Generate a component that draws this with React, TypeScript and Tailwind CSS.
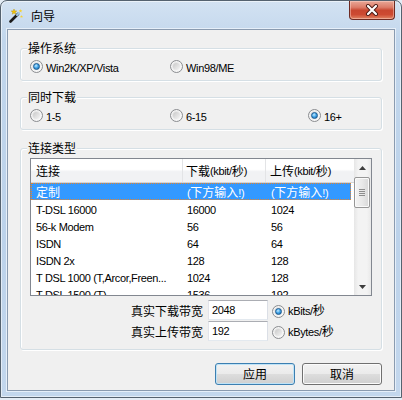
import React from "react";

const CJK = /([\u3000-\u9fff\uff00-\uffef]+)/;
const CJK1 = /[\u3000-\u9fff\uff00-\uffef]/;

function T({ s }: { s: string }) {
  return (
    <>
      {s
        .split(CJK)
        .filter(Boolean)
        .map((p, i) =>
          CJK1.test(p) ? (
            <span key={i} className="font-['Noto_Sans_CJK_SC',sans-serif] text-[12px]">
              {p}
            </span>
          ) : (
            <span key={i} className="font-['Liberation_Sans',sans-serif] text-[11px] tracking-[-0.35px]">
              {p}
            </span>
          )
        )}
    </>
  );
}

function Radio({ checked }: { checked?: boolean }) {
  return (
    <span className="inline-flex h-[13px] w-[13px] shrink-0 items-center justify-center rounded-full border border-[#8b8d90] bg-[linear-gradient(135deg,#dcdcdc,#ffffff)] shadow-[inset_0_0_0_1px_#f6f6f6]">
      {checked ? (
        <span className="h-[7px] w-[7px] rounded-full border border-[#1b5a91] bg-[radial-gradient(circle_at_40%_35%,#c8ecff_0%,#45a7ea_45%,#14609f_100%)]" />
      ) : (
        <span className="h-[7px] w-[7px] rounded-full bg-[linear-gradient(135deg,#c9c9c9,#f4f4f4)]" />
      )}
    </span>
  );
}

function Group({ label, className, children }: { label: string; className?: string; children: React.ReactNode }) {
  return (
    <div
      className={
        "relative mx-[12px] rounded-[3px] border border-[#d5dfe5] shadow-[inset_1px_1px_0_#ffffff,1px_1px_0_#ffffff] " +
        (className || "")
      }
    >
      <div className="absolute left-[6px] top-[-9px] bg-[#f0f0f0] px-[1px] leading-[14px] text-black">
        <T s={label} />
      </div>
      {children}
    </div>
  );
}

function RadioItem({ label, checked, w }: { label: string; checked?: boolean; w: string }) {
  return (
    <div className={"flex h-[15px] items-center gap-[3px] leading-[14px] text-black " + w}>
      <Radio checked={checked} />
      <span className="whitespace-nowrap">
        <T s={label} />
      </span>
    </div>
  );
}

const rows: [string, string, string][] = [
  ["定制", "(下方输入!)", "(下方输入!)"],
  ["T-DSL 16000", "16000", "1024"],
  ["56-k Modem", "56", "56"],
  ["ISDN", "64", "64"],
  ["ISDN 2x", "128", "128"],
  ["T DSL 1000 (T,Arcor,Freen...", "1024", "128"],
  ["T DSL 1500 (T)", "1536", "192"],
];

function Wand() {
  return (
    <svg width="15" height="15" viewBox="0 0 15 15">
      <path d="M1.5 13.5 L9 6" stroke="#1a1a1a" strokeWidth="2.6" strokeLinecap="round" />
      <path d="M8 7 L10 5" stroke="#9bc7e8" strokeWidth="2" strokeLinecap="round" />
      <path d="M5 1 L5.8 2.9 L7.8 3 L6.2 4.2 L6.8 6.2 L5 5 L3.2 6.2 L3.8 4.2 L2.2 3 L4.2 2.9Z" fill="#f5c400" stroke="#b08a00" strokeWidth="0.4" />
      <path d="M11.5 1 L12 2.3 L13.4 2.4 L12.3 3.2 L12.7 4.6 L11.5 3.8 L10.3 4.6 L10.7 3.2 L9.6 2.4 L11 2.3Z" fill="#f7d230" />
      <path d="M12.5 7 L12.9 8 L14 8.1 L13.2 8.7 L13.5 9.8 L12.5 9.2 L11.5 9.8 L11.8 8.7 L11 8.1 L12.1 8Z" fill="#f7d230" />
    </svg>
  );
}

function BottomRow({ label, value, unit, checked }: { label: string; value: string; unit: string; checked?: boolean }) {
  return (
    <div className="flex h-[20px] items-center leading-[14px] text-black">
      <div className="w-[173px] text-right">
        <T s={label} />
      </div>
      <div className="ml-[5px] flex h-[20px] w-[60px] items-center border border-[#abadb3] border-b-[#e3e9ef] border-l-[#e2e3ea] border-r-[#dbdfe6] bg-white pl-[3px]">
        <T s={value} />
      </div>
      <div className="ml-[4px]">
        <Radio checked={checked} />
      </div>
      <div className="ml-[3px] whitespace-nowrap">
        <T s={unit} />
      </div>
    </div>
  );
}

function Button({ label, def }: { label: string; def?: boolean }) {
  return (
    <div
      className={
        "flex h-[22px] w-[80px] items-center justify-center rounded-[3px] border bg-[linear-gradient(180deg,#f2f2f2_0%,#ebebeb_48%,#dddddd_52%,#cfcfcf_100%)] leading-[14px] text-black " +
        (def
          ? "border-[#3c7fb1] shadow-[inset_0_0_0_1px_#bfe3f7]"
          : "border-[#707070] shadow-[inset_0_0_0_1px_#fbfbfb]")
      }
    >
      <T s={label} />
    </div>
  );
}

export default function App() {
  return (
    <div className="h-[400px] w-[402px] bg-[#e4ecf5]">
      <div className="flex h-[398px] w-[402px] flex-col rounded-t-[7px] border border-[#55626f] bg-[linear-gradient(180deg,#d3e2f2_0%,#c1d6ec_10%,#bcd2ea_60%,#c3d7ed_100%)] px-[6px] pb-[6px] shadow-[inset_0_0_0_1px_rgba(255,255,255,0.55)]">
        {/* title bar */}
        <div className="flex h-[28px] items-start justify-between">
          <div className="flex items-center pl-[2px] pt-[7px]">
            <Wand />
            <span className="ml-[7px] font-['Noto_Sans_CJK_SC',sans-serif] text-[12px] leading-[15px] text-black">向导</span>
          </div>
          <div className="flex h-[19px] w-[46px] items-center justify-center rounded-b-[4px] border border-t-0 border-[#6d2a22] bg-[linear-gradient(180deg,#e9a898_0%,#dc7c69_35%,#c8462f_52%,#cd4a32_75%,#e08463_100%)] shadow-[inset_0_0_0_1px_rgba(255,220,210,0.45)]">
            <svg width="14" height="12" viewBox="0 0 14 12">
              <path d="M3 2 L11 10 M11 2 L3 10" stroke="#4a1a14" strokeWidth="4" strokeLinecap="round" />
              <path d="M3 2 L11 10 M11 2 L3 10" stroke="#ffffff" strokeWidth="2.2" strokeLinecap="round" />
            </svg>
          </div>
        </div>
        {/* client */}
        <div className="flex flex-1 flex-col border border-[#8a9bb0] bg-[#f0f0f0] shadow-[0_0_0_1px_#e6eff9]">
          <Group label="操作系统" className="mt-[18px]">
            <div className="flex pb-[6px] pl-[9px] pt-[10px]">
              <RadioItem label="Win2K/XP/Vista" checked w="w-[140px]" />
              <RadioItem label="Win98/ME" w="w-[138px]" />
            </div>
          </Group>
          <Group label="同时下载" className="mt-[16px]">
            <div className="flex pb-[6px] pl-[9px] pt-[10px]">
              <RadioItem label="1-5" w="w-[140px]" />
              <RadioItem label="6-15" w="w-[138px]" />
              <RadioItem label="16+" checked w="w-[60px]" />
            </div>
          </Group>
          <Group label="连接类型" className="mt-[18px] pb-[8px]">
            <div className="mx-[9px] mt-[9px] flex h-[138px] overflow-hidden border border-[#828790] bg-white">
              <div className="flex min-w-0 flex-1 flex-col overflow-hidden">
                <div className="flex h-[24px] shrink-0 items-center border-b border-[#d5d5d5] bg-[linear-gradient(180deg,#ffffff_0%,#ffffff_45%,#f1f2f4_55%,#f1f2f4_100%)] leading-[14px] text-black">
                  <div className="flex h-full w-[152px] items-center border-r border-[#e3e4e6] pl-[5px]">
                    <T s="连接" />
                  </div>
                  <div className="flex h-full w-[83px] items-center border-r border-[#e3e4e6] pl-[3px]">
                    <T s="下载(kbit/秒)" />
                  </div>
                  <div className="flex h-full flex-1 items-center pl-[4px]">
                    <T s="上传(kbit/秒)" />
                  </div>
                </div>
                {rows.map((r, i) => (
                  <div
                    key={i}
                    className={
                      "flex h-[17px] w-[320px] shrink-0 items-center leading-[14px] " +
                      (i === 0
                        ? "bg-[#3399ff] text-white outline-1 outline-dotted outline-[#e8842a] -outline-offset-1"
                        : "text-black")
                    }
                  >
                    <div className="w-[152px] overflow-hidden whitespace-nowrap pl-[5px]">
                      <T s={r[0]} />
                    </div>
                    <div className="w-[83px] whitespace-nowrap pl-[4px]">
                      <T s={r[1]} />
                    </div>
                    <div className="flex-1 whitespace-nowrap pl-[5px]">
                      <T s={r[2]} />
                    </div>
                  </div>
                ))}
              </div>
              {/* scrollbar */}
              <div className="flex w-[17px] shrink-0 flex-col bg-[linear-gradient(90deg,#e6e6e6,#f3f3f3_25%,#f3f3f3_75%,#e9e9e9)]">
                <div className="flex h-[18px] items-center justify-center">
                  <svg width="7" height="4" viewBox="0 0 7 4">
                    <path d="M0 4 L3.5 0 L7 4Z" fill="#3c3c3c" />
                  </svg>
                </div>
                <div className="ml-[0px] mr-[1px] flex h-[31px] flex-col items-center justify-center gap-[1px] rounded-[2px] border border-[#979797] bg-[linear-gradient(90deg,#f4f4f4,#e9e9e9_50%,#d8d8d8)] shadow-[inset_0_0_0_1px_#fafafa]">
                  <div className="h-[1px] w-[6px] bg-[#8d8d8d]" />
                  <div className="h-[1px] w-[6px] bg-[#8d8d8d]" />
                  <div className="h-[1px] w-[6px] bg-[#8d8d8d]" />
                  <div className="h-[1px] w-[6px] bg-[#8d8d8d]" />
                </div>
                <div className="flex-1" />
                <div className="flex h-[17px] items-center justify-center">
                  <svg width="7" height="4" viewBox="0 0 7 4">
                    <path d="M0 0 L3.5 4 L7 0Z" fill="#3c3c3c" />
                  </svg>
                </div>
              </div>
            </div>
            <div className="mt-[4px] flex flex-col gap-[1px] pl-[9px]">
              <BottomRow label="真实下载带宽" value="2048" unit="kBits/秒" checked />
              <BottomRow label="真实上传带宽" value="192" unit="kBytes/秒" />
            </div>
          </Group>
          <div className="mr-[12px] mt-[13px] flex justify-end gap-[7px]">
            <Button label="应用" def />
            <Button label="取消" />
          </div>
        </div>
      </div>
    </div>
  );
}
